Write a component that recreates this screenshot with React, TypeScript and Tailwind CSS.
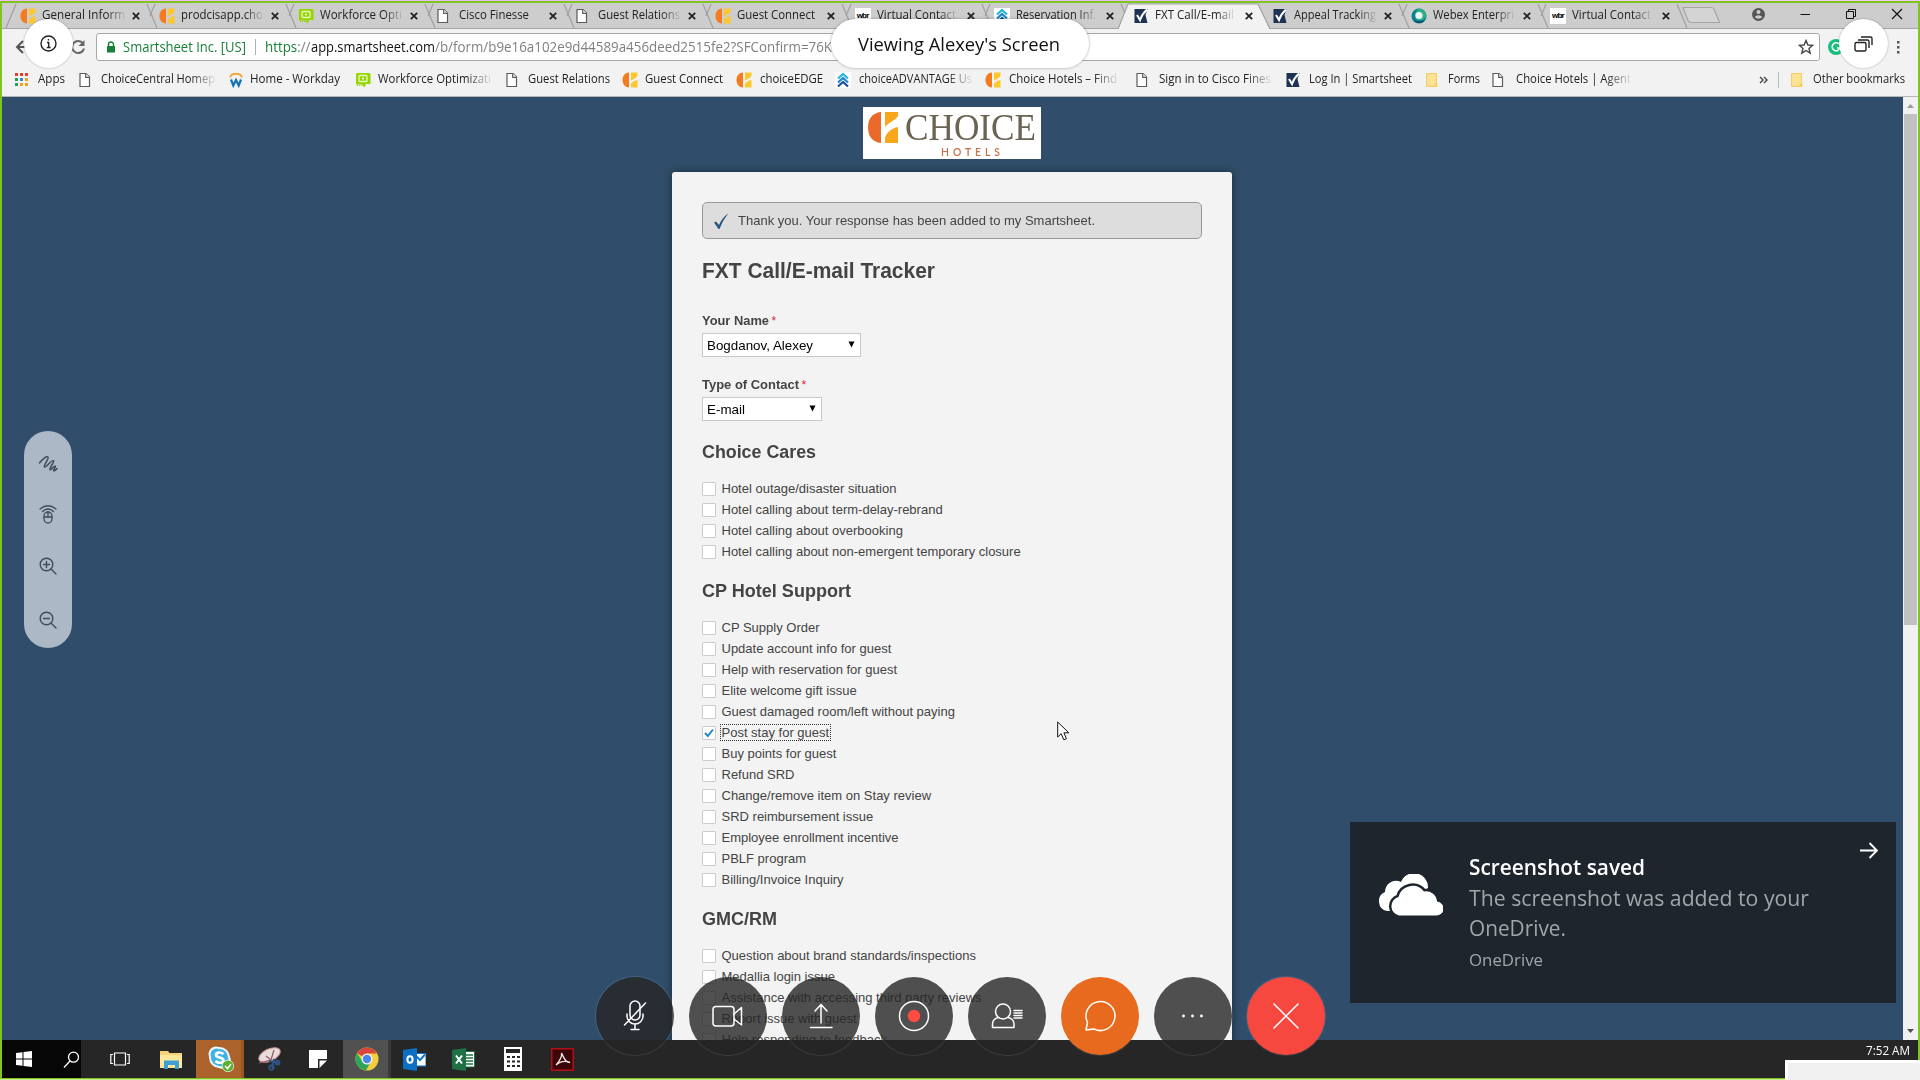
import { useLayoutEffect, useRef, useState, type ReactNode } from 'react';

/* Text stretched or condensed horizontally to an exact width. */
function Fit({ w, className = '', children }: { w: number; className?: string; children: ReactNode }) {
  const ref = useRef<HTMLSpanElement>(null);
  const [k, setK] = useState(1);
  useLayoutEffect(() => {
    const el = ref.current;
    if (el) {
      const prev = el.style.transform;
      el.style.transform = 'none';
      const n = el.getBoundingClientRect().width;
      el.style.transform = prev;
      if (n > 0) setK(w / n);
    }
  }, [w]);
  return (
    <span className={`block shrink-0 whitespace-nowrap ${className}`} style={{ width: w }}>
      <span ref={ref} className="inline-block origin-left whitespace-pre" style={{ transform: `scaleX(${k})` }}>
        {children}
      </span>
    </span>
  );
}

const FADE = '[mask-image:linear-gradient(to_right,black_78%,transparent_102%)]';

type IconName = 'choice' | 'chat' | 'page' | 'wbr' | 'adv' | 'check' | 'webex' | 'apps' | 'workday' | 'folder';

function SiteIcon({ name }: { name: IconName }) {
  const c = 'block h-4 w-4 shrink-0';
  switch (name) {
    case 'choice':
      return (
        <svg className={c} viewBox="0 0 16 16">
          <path d="M7 0.5V15.5C2.5 15 0.5 12 0.5 8S2.5 1 7 .5Z" fill="#f47b20" />
          <path d="M9 .5H15.5V4L13 6.500 9 8.500Z" fill="#fdc82f" />
          <path d="M15.500 8V15.500H9V11.500L12 9Z" fill="#fdc82f" />
        </svg>
      );
    case 'chat':
      return (
        <svg className={c} viewBox="0 0 16 16">
          <path d="M2 1H14A1.500 1.500 0 0 1 15.500 2.500V12H11L9.500 15.500 7 12.500H1V2Z" fill="#95d600" />
          <rect x="4" y="3.500" width="8" height="6" rx="1" fill="none" stroke="#e6f7c8" strokeWidth="1.300" />
          <circle cx="8" cy="6.500" r="1" fill="#fff" />
          <path d="M2 13.500H7" stroke="#95d600" strokeDasharray="1 1" />
        </svg>
      );
    case 'page':
      return (
        <svg className={c} viewBox="2.500 0 16 16" fill="#fff" stroke="#5a5a5a" strokeWidth="1.200">
          <path d="M3.500 1.500H9.500L13 5V14.500H3.500Z" />
          <path d="M9.200 1.500V5.300H13" />
        </svg>
      );
    case 'wbr':
      return (
        <span className="flex h-4 w-4 shrink-0 items-center justify-center bg-white font-['Liberation_Sans'] text-[8px] font-bold tracking-[-0.800px] text-black">
          wbr
        </span>
      );
    case 'adv':
      return (
        <svg className={c} viewBox="0 0 16 16">
          <rect width="16" height="16" fill="#fff" />
          <g fill="none" strokeWidth="2.200">
            <path d="M3 6.500 8 2 13 6.500" stroke="#27b5d8" />
            <path d="M3 10.500 8 6 13 10.500" stroke="#1c86c8" />
            <path d="M3 14.500 8 10 13 14.500" stroke="#1a4f9c" />
          </g>
        </svg>
      );
    case 'check':
      return (
        <svg className={c} viewBox="0 0 16 16">
          <path d="M1.500 1H14.500L12.500 7 14.500 15H1.500Z" fill="#1e3353" />
          <path d="M4 7 7 12Q9 6 14 1.500" fill="none" stroke="#fff" strokeWidth="2" />
        </svg>
      );
    case 'webex':
      return (
        <svg className={c} viewBox="0 0 16 16">
          <circle cx="8" cy="8" r="7.500" fill="#0a7f8f" />
          <path d="M8 .5A7.500 7.500 0 0 1 15.500 8C14 12 9 14 5 11 3 8 4 3 8 .5Z" fill="#2fae8a" />
          <circle cx="8" cy="7.500" r="3.600" fill="#eaf6f4" />
          <path d="M2 12A7.500 7.500 0 0 0 14 12C10 14 5 14 2 12Z" fill="#10406a" />
        </svg>
      );
    case 'apps':
      return (
        <span className="grid shrink-0 grid-cols-3 gap-[2px]">
          {['bg-[#e8402a]', 'bg-[#e8402a]', 'bg-[#e8402a]', 'bg-[#1aa260]', 'bg-[#4285c8]', 'bg-[#f0a020]', 'bg-[#1aa260]', 'bg-[#f0a020]', 'bg-[#f0a020]'].map((b, i) => (
            <span key={i} className={`h-[3px] w-[3px] ${b}`} />
          ))}
        </span>
      );
    case 'workday':
      return (
        <svg className={c} viewBox="0 0 16 16" fill="none">
          <path d="M2 5.500A6.200 5 0 0 1 14 5.500" stroke="#efa741" strokeWidth="1.800" />
          <path d="M3 7.500 5.300 13.500 8 8 10.700 13.500 13 7.500" stroke="#1572b6" strokeWidth="2.200" />
        </svg>
      );
    case 'folder':
      return (
        <svg className={c} viewBox="0 0 16 16">
          <path d="M2.500 1.500H12.500V14.500H2.500Z" fill="#fde293" stroke="#f0cd62" />
          <path d="M10.500 11.500H13.500V14.500H10.500Z" fill="#f3cf62" />
        </svg>
      );
  }
}

const TABS: { icon: IconName; text: string; w: number; fade?: boolean; active?: boolean }[] = [
  { icon: 'choice', text: 'General Inform', w: 83, fade: true },
  { icon: 'choice', text: 'prodcisapp.cho', w: 82, fade: true },
  { icon: 'chat', text: 'Workforce Opti', w: 82, fade: true },
  { icon: 'page', text: 'Cisco Finesse', w: 70 },
  { icon: 'page', text: 'Guest Relations', w: 82, fade: true },
  { icon: 'choice', text: 'Guest Connect', w: 78 },
  { icon: 'wbr', text: 'Virtual Contact', w: 79, fade: true },
  { icon: 'adv', text: 'Reservation Inf.', w: 80, fade: true },
  { icon: 'check', text: 'FXT Call/E-mail', w: 79, fade: true, active: true },
  { icon: 'check', text: 'Appeal Tracking', w: 82, fade: true },
  { icon: 'webex', text: 'Webex Enterpri', w: 81, fade: true },
  { icon: 'wbr', text: 'Virtual Contact', w: 79, fade: true },
];

function Tab({ tab, first, afterActive }: { tab: (typeof TABS)[number]; first: boolean; afterActive: boolean }) {
  return (
    <div className="relative flex h-[26px] w-[139.100px] shrink-0 items-center pb-px pl-[7px]">
      <svg className="absolute top-0 -left-2 h-[26px] w-[156px]" viewBox="0 0 156 26" fill="none" stroke="#a0a0a0" strokeWidth="1.200">
        {tab.active && <path d="M0 26 10 1H140L152 26" fill="#f2f2f2" />}
        {!tab.active && (first ? <path d="M1 25 11 1" /> : !afterActive && <path d="M6 13 11 1" />)}
        {!tab.active && <path d="M142 1 152 25" />}
      </svg>
      <div className="relative flex items-center">
        <SiteIcon name={tab.icon} />
        <Fit w={tab.w} className={`ml-[6px] text-[12.500px] text-[#222] ${tab.fade ? FADE : ''}`}>
          {tab.text}
        </Fit>
      </div>
      <svg className="absolute top-[9px] left-[119px] h-2 w-2" viewBox="0 0 8 8" stroke="#222" strokeWidth="1.800">
        <path d="M.8.8 7.200 7.200M7.200.8.8 7.200" />
      </svg>
    </div>
  );
}

const MARKS: { icon: IconName; text: string; w: number; cell: string; gap: string; fade?: boolean }[] = [
  { icon: 'apps', text: 'Apps', w: 27, cell: 'w-[64px]', gap: 'gap-[10px]' },
  { icon: 'page', text: 'ChoiceCentral Homep', w: 114, cell: 'w-[149px]', gap: 'gap-[6px]', fade: true },
  { icon: 'workday', text: 'Home - Workday', w: 90, cell: 'w-[127px]', gap: 'gap-[6px]' },
  { icon: 'chat', text: 'Workforce Optimizati', w: 113, cell: 'w-[151px]', gap: 'gap-[7px]', fade: true },
  { icon: 'page', text: 'Guest Relations', w: 82, cell: 'w-[116px]', gap: 'gap-[6px]' },
  { icon: 'choice', text: 'Guest Connect', w: 78, cell: 'w-[114px]', gap: 'gap-[7px]' },
  { icon: 'choice', text: 'choiceEDGE', w: 63, cell: 'w-[99px]', gap: 'gap-[8px]' },
  { icon: 'adv', text: 'choiceADVANTAGE Us', w: 113, cell: 'w-[150px]', gap: 'gap-[8px]', fade: true },
  { icon: 'choice', text: 'Choice Hotels – Find', w: 108, cell: 'w-[151px]', gap: 'gap-[8px]', fade: true },
  { icon: 'page', text: 'Sign in to Cisco Fines', w: 112, cell: 'w-[149px]', gap: 'gap-[7px]', fade: true },
  { icon: 'check', text: 'Log In | Smartsheet', w: 103, cell: 'w-[139px]', gap: 'gap-[8px]' },
  { icon: 'folder', text: 'Forms', w: 32, cell: 'w-[68px]', gap: 'gap-[8px]' },
  { icon: 'page', text: 'Choice Hotels | Agent', w: 115, cell: 'w-[150px]', gap: 'gap-[8px]', fade: true },
];

function Browser() {
  return (
    <header className="flex h-[94px] flex-col border-b border-[#b6b6b6] bg-[#f2f2f2] font-['Open_Sans','Noto_Sans',sans-serif]">
      <div className="flex h-[26px] shrink-0 border-b border-[#a5a5a5] bg-[#cdcdcd] pl-[11px]">
        {TABS.map((t, i) => (
          <Tab key={i} tab={t} first={i === 0} afterActive={i > 0 && !!TABS[i - 1].active} />
        ))}
        <svg className="mt-[3px] ml-[-1px] h-[18px] w-[40px]" viewBox="0 0 40 18" fill="#d4d4d4" stroke="#a5a5a5" strokeWidth="1.200">
          <path d="M2 1.500H30Q32 1.500 33 3L38.500 16.500H10Q8 16.500 7 14.500Z" />
        </svg>
        <div className="ml-[30px] flex items-center pb-[3px]">
          <svg className="h-[15px] w-[15px]" viewBox="0 0 15 15">
            <circle cx="7.500" cy="7.500" r="6.500" fill="#555" />
            <circle cx="7.500" cy="5" r="2" fill="#cdcdcd" />
            <path d="M3.500 10Q7.500 6.500 11.500 10Q7.500 13.500 3.500 10Z" fill="#cdcdcd" />
          </svg>
          <svg className="ml-[33px] h-3 w-3" viewBox="0 0 12 12" stroke="#111">
            <path d="M1.500 6.500H11" />
          </svg>
          <svg className="ml-[34px] h-3 w-3" viewBox="0 0 12 12" fill="none" stroke="#111">
            <path d="M1.500 3.500H8.500V10.500H1.500ZM3.500 3.500V1.500H10.500V8.500H8.500" />
          </svg>
          <svg className="ml-[34px] h-3 w-3" viewBox="0 0 12 12" stroke="#111" strokeWidth="1.200">
            <path d="M1 1 11 11M11 1 1 11" />
          </svg>
        </div>
      </div>
      <div className="flex h-[36px] shrink-0 items-center pl-[12px]">
        <svg className="h-4 w-4" viewBox="0 0 16 16" fill="none" stroke="#555" strokeWidth="2">
          <path d="M15 8H3M9 2 3 8 9 14" />
        </svg>
        <svg className="ml-[40px] h-4 w-4" viewBox="0 0 16 16" fill="none" stroke="#666" strokeWidth="2">
          <path d="M13 4.500A6 6 0 1 0 14 9.500" />
          <path d="M14.500 1V7H8.500Z" fill="#666" stroke="none" />
        </svg>
        <div className="ml-[10px] flex h-[28px] w-[1724px] items-center rounded-[3px] border border-[#a9a9a9] bg-white pb-px pl-[10px] text-[14px]">
          <svg className="h-3 w-[8px]" viewBox="0 0 8 12">
            <path d="M1.500 6V3.500A2.500 2.500 0 0 1 6.500 3.500V6" fill="none" stroke="#188038" strokeWidth="1.400" />
            <rect y="5" width="8" height="6.500" fill="#188038" />
          </svg>
          <Fit w={123} className="ml-[8px] text-[#188038]">Smartsheet Inc. [US]</Fit>
          <span className="ml-[9px] h-4 w-px bg-[#b0b0b0]" />
          <Fit w={45.500} className="ml-[9px] text-[#188038]">
            https<span className="text-[#808080]">://</span>
          </Fit>
          <Fit w={124} className="text-[#111]">app.smartsheet.com</Fit>
          <Fit w={397} className="text-[#808080]">/b/form/b9e16a102e9d44589a456deed2515fe2?SFConfirm=76K</Fit>
          <svg className="ml-auto mr-[5px] h-4 w-4" viewBox="0 0 16 16" fill="none" stroke="#444" strokeWidth="1.400">
            <path d="M8 1.500 9.900 6 14.700 6.300 11 9.400 12.200 14.200 8 11.500 3.800 14.200 5 9.400 1.300 6.300 6.100 6Z" />
          </svg>
        </div>
        <svg className="ml-[8px] h-4 w-4" viewBox="0 0 16 16">
          <circle cx="8" cy="8" r="8" fill="#15c07a" />
          <path d="M11 5A4 4 0 1 0 12 9H9" fill="none" stroke="#fff" strokeWidth="1.500" />
        </svg>
        <svg className="ml-[46px] h-4 w-4" viewBox="0 0 16 16" fill="#555">
          <rect x="7" y="2" width="2.500" height="2.500" />
          <rect x="7" y="7" width="2.500" height="2.500" />
          <rect x="7" y="12" width="2.500" height="2.500" />
        </svg>
      </div>
      <div className="flex h-[29px] shrink-0 items-center pl-[13px] text-[12.500px] text-[#222]">
        {MARKS.map((m, i) => (
          <div key={i} className={`flex shrink-0 items-center ${m.cell} ${m.gap}`}>
            <SiteIcon name={m.icon} />
            <Fit w={m.w} className={m.fade ? FADE : ''}>{m.text}</Fit>
          </div>
        ))}
        <svg className="ml-[117px] h-[8px] w-[9px]" viewBox="0 0 9 8" fill="none" stroke="#444" strokeWidth="1.400">
          <path d="M1 1 4 4 1 7M5 1 8 4 5 7" />
        </svg>
        <span className="ml-[10px] h-4 w-px bg-[#bbb]" />
        <div className="ml-[10px] flex items-center gap-[8px]">
          <SiteIcon name="folder" />
          <Fit w={92}>Other bookmarks</Fit>
        </div>
      </div>
    </header>
  );
}

const GROUPS = [
  {
    title: 'Choice Cares',
    w: 114,
    items: [
      'Hotel outage/disaster situation',
      'Hotel calling about term-delay-rebrand',
      'Hotel calling about overbooking',
      'Hotel calling about non-emergent temporary closure',
    ],
  },
  {
    title: 'CP Hotel Support',
    w: 149,
    items: [
      'CP Supply Order',
      'Update account info for guest',
      'Help with reservation for guest',
      'Elite welcome gift issue',
      'Guest damaged room/left without paying',
      'Post stay for guest',
      'Buy points for guest',
      'Refund SRD',
      'Change/remove item on Stay review',
      'SRD reimbursement issue',
      'Employee enrollment incentive',
      'PBLF program',
      'Billing/Invoice Inquiry',
    ],
  },
  {
    title: 'GMC/RM',
    w: 75,
    items: [
      'Question about brand standards/inspections',
      'Medallia login issue',
      'Assistance with accessing third party reviews',
      'Report issue with guest',
      'Help responding to feedback',
    ],
  },
];

function Item({ text }: { text: string }) {
  const checked = text === 'Post stay for guest';
  return (
    <li className="flex h-[21px] items-center">
      <span className="flex h-[14px] w-[14px] items-center justify-center rounded-[1px] border border-[#ccc] bg-white">
        {checked && (
          <svg className="h-[10px] w-[10px]" viewBox="0 0 10 10" fill="none" stroke="#2a86c0" strokeWidth="2">
            <path d="M1 5 3.800 8 9 1.500" />
          </svg>
        )}
      </span>
      <span className={`ml-[5px] px-px leading-[15px] text-[#444] ${checked ? 'outline-1 outline-dotted outline-[#333]' : ''}`}>{text}</span>
    </li>
  );
}

function Select({ value, w, className }: { value: string; w: number; className: string }) {
  return (
    <div className={`flex h-[24px] items-center justify-between border border-[#c8c8c8] bg-white pt-px pr-[5px] pl-[4px] text-[13.300px] text-black ${className}`}>
      <Fit w={w}>{value}</Fit>
      <svg className="mb-[2px] h-[7px] w-[7px]" viewBox="0 0 7 7">
        <path d="M.5.5H6.500L3.500 6.500Z" fill="#000" />
      </svg>
    </div>
  );
}

function Form() {
  return (
    <main className="flex min-h-0 flex-1 flex-col items-center overflow-hidden bg-[#304e6b] pr-[2px] font-['Liberation_Sans',Arial,sans-serif] text-[13px]">
      <div className="mt-[10px] flex h-[52px] w-[178px] shrink-0 bg-white pt-[5px] pl-[5px]">
        <svg className="h-[31px] w-[30px]" viewBox="0 0 30 31">
          <path d="M13 0V31C4 30 0 24 0 15.500S4 1 13 0Z" fill="#ea6a2b" />
          <path d="M17 0H30V4C27 9 22 9 17 15Z" fill="#f9a61a" />
          <path d="M30 15V31H17V26C18 21 24 16 30 15Z" fill="#f9a61a" />
        </svg>
        <div className="ml-[7px] flex flex-col font-['Liberation_Serif',serif] text-[#6b6452]">
          <Fit w={131} className="h-[35px] text-[37px] leading-[31px]">CHOICE</Fit>
          <Fit w={63} className="ml-[36px] h-[10px] font-['Lato',sans-serif] text-[10.500px] leading-[10px] font-semibold tracking-[4px] text-[#c8704a]">
            HOTELS
          </Fit>
        </div>
      </div>
      <div className="mt-[13px] h-[1000px] w-[560px] shrink-0 rounded-t-[3px] bg-[#f3f3f3] px-[30px] pt-[30px] text-[#444] shadow-[0_0_10px_rgba(0,0,0,0.450)]">
        <div className="flex h-[37px] w-[500px] items-center rounded-[5px] border border-[#999] bg-[#ddd] pl-[11px]">
          <svg className="h-[16px] w-[15px]" viewBox="0 0 15 16">
            <path d="M0 9.500 2 8.500 5 12Q8 5 14.500 0Q8.500 7.500 5.500 16H4.500Z" fill="#2c5480" />
          </svg>
          <Fit w={357} className="ml-[9px]">Thank you. Your response has been added to my Smartsheet.</Fit>
        </div>
        <h1 className="mt-[17px] flex h-[30px] items-center text-[21.500px] font-bold">
          <Fit w={233}>FXT Call/E-mail Tracker</Fit>
        </h1>
        <div className="mt-[27px] flex h-[16px] gap-[3px] font-bold">
          <Fit w={67} className="leading-[16px]">Your Name</Fit>
          <span className="text-[12px] leading-[17px] font-normal text-[#e02040]">*</span>
        </div>
        <Select value="Bogdanov, Alexey" w={106} className="mt-[4px] w-[159px]" />
        <div className="mt-[20px] flex h-[16px] gap-[3px] font-bold">
          <Fit w={97} className="leading-[16px]">Type of Contact</Fit>
          <span className="text-[12px] leading-[17px] font-normal text-[#e02040]">*</span>
        </div>
        <Select value="E-mail" w={38} className="mt-[4px] w-[120px]" />
        {GROUPS.map((g) => (
          <section key={g.title} className="mb-[19px] last:mb-0 [&:first-of-type]:mt-[21px]">
            <h2 className="flex h-[20px] items-center text-[17.500px] font-bold">
              <Fit w={g.w}>{g.title}</Fit>
            </h2>
            <ul className="mt-[16px]">
              {g.items.map((t) => (
                <Item key={t} text={t} />
              ))}
            </ul>
          </section>
        ))}
      </div>
    </main>
  );
}

function Scrollbar() {
  return (
    <div className="flex w-[15px] flex-col items-center bg-[#f1f1f1]">
      <svg className="mt-[7px] h-[4px] w-[7px]" viewBox="0 0 7 4">
        <path d="M0 4 3.500 0 7 4Z" fill="#9a9a9a" />
      </svg>
      <div className="mt-[6px] h-[511px] w-[13px] bg-[#c1c1c1]" />
      <svg className="mt-auto mb-[7px] h-[4px] w-[7px]" viewBox="0 0 7 4">
        <path d="M0 0H7L3.500 4Z" fill="#505050" />
      </svg>
    </div>
  );
}

function Taskbar() {
  return (
    <footer className="flex h-[38px] shrink-0 bg-[#262626]">
      <div className="flex w-[79px] items-center bg-[#060606] pl-[14px]">
        <svg className="h-4 w-4" viewBox="0 0 16 16" fill="#fff">
          <path d="M0 2 6.500 1.200V7.500H0ZM7.500 1 16 0V7.500H7.500ZM0 8.500H6.500V14.800L0 14ZM7.500 8.500H16V16L7.500 15Z" />
        </svg>
        <svg className="ml-[31px] h-[17px] w-[17px]" viewBox="0 0 17 17" fill="none" stroke="#fff" strokeWidth="1.300">
          <circle cx="10.500" cy="6.200" r="5" />
          <path d="M7 10 1 16.500" />
        </svg>
      </div>
      <div className="flex w-[115px] items-center pl-[29px]">
        <svg className="h-[14px] w-[20px]" viewBox="0 0 20 14" fill="none" stroke="#fff" strokeWidth="1.200">
          <path d="M4.500 1H15.500V13H4.500ZM3 2.500H.8V11.500H3M17 2.500H19.200V11.500H17" />
        </svg>
        <svg className="ml-[30px] h-[19px] w-[22px]" viewBox="0 0 22 19">
          <path d="M0 1H8L9.500 3H22V18H0Z" fill="#f5d376" />
          <path d="M0 5H22V18H0Z" fill="#fde79b" />
          <path d="M4 10.500H19V19H15V15H8V19H4Z" fill="#3f9fd0" />
        </svg>
      </div>
      <div className="flex w-[48px] items-center border-r-[3px] border-[#9a5522] bg-[#ab622b] pl-[12px]">
        <svg className="h-[26px] w-[26px] shrink-0" viewBox="0 0 26 26">
          <circle cx="8" cy="8" r="7.500" fill="#eaf7fc" />
          <circle cx="15" cy="15" r="8" fill="#eaf7fc" />
          <circle cx="11.500" cy="11.500" r="10.500" fill="#eaf7fc" />
          <circle cx="8.500" cy="8.500" r="6" fill="#3fb4e4" />
          <circle cx="14" cy="14" r="6.500" fill="#3fb4e4" />
          <circle cx="11.500" cy="11.500" r="8.500" fill="#3fb4e4" />
          <path d="M15.500 8C12 5.500 8 6.500 8 9 8 12 15.500 11 15.500 14.500 15 17.500 10 17.500 7.500 15" fill="none" stroke="#fff" strokeWidth="2.600" />
          <circle cx="20" cy="20" r="5.800" fill="#5db030" stroke="#e8f5df" strokeWidth=".8" />
          <path d="M17 20 19.500 22.500 23 18" fill="none" stroke="#fff" strokeWidth="1.500" />
        </svg>
      </div>
      <div className="flex w-[99px] items-center pl-[13px]">
        <svg className="h-[24px] w-[24px]" viewBox="0 0 24 24">
          <ellipse cx="12.500" cy="8" rx="11.500" ry="6" transform="rotate(-25 12.500 8)" fill="#e8dcdc" stroke="#c99090" />
          <path d="M2 16 14 13 17 3M9 9 14 13" fill="none" stroke="#94595c" strokeWidth="1.200" />
          <path d="M12 14 23 16M17 12 15 21" stroke="#2f5488" strokeWidth="2" />
          <circle cx="14.500" cy="20.500" r="2.300" fill="none" stroke="#2f5488" strokeWidth="1.700" />
          <circle cx="20.500" cy="15.500" r="2" fill="none" stroke="#2f5488" strokeWidth="1.700" />
        </svg>
        <svg className="ml-[28px] h-[18px] w-[18px]" viewBox="0 0 18 18">
          <path d="M0 0H18V9H9V18H0Z" fill="#fff" />
          <path d="M10.500 10.500H18L10.500 18Z" fill="#fff" />
        </svg>
      </div>
      <div className="flex w-[48px] items-center border-r-[3px] border-[#3a3a3a] bg-[#515151] pl-[12px]">
        <svg className="h-[24px] w-[24px] shrink-0" viewBox="0 0 24 24">
          <circle cx="12" cy="12" r="11.500" fill="#f5cf3b" />
          <path d="M12 12 2 6.200A11.500 11.500 0 0 1 22 6.500H12Z" fill="#d8473c" />
          <path d="M2 6.200A11.500 11.500 0 0 0 11 23.500L15.500 15 8 15Z" fill="#2fa55a" />
          <circle cx="12" cy="12" r="5.500" fill="#f4f4f4" />
          <circle cx="12" cy="12" r="4.200" fill="#4a85e8" />
        </svg>
      </div>
      <div className="flex items-center pl-[12px]">
        <svg className="h-[23px] w-[23px]" viewBox="0 0 23 23">
          <path d="M10 5.500H23V18H10Z" fill="#fff" stroke="#1473c5" />
          <path d="M13 8 17 12 22 6.500" fill="none" stroke="#1473c5" strokeWidth="2" />
          <path d="M0 2 14 0V23L0 21Z" fill="#0d6fc4" />
          <ellipse cx="7" cy="11.500" rx="2.600" ry="3.200" fill="none" stroke="#fff" strokeWidth="2" />
        </svg>
        <svg className="ml-[26px] h-[23px] w-[23px]" viewBox="0 0 23 23">
          <path d="M12 3.500H22.500V19H12Z" fill="#fff" stroke="#1f7145" />
          <path d="M14 7H21M14 10H21M14 13H21M14 16H21" stroke="#1f7145" strokeWidth="1.400" />
          <path d="M0 2 14 0V23L0 21Z" fill="#1f7145" />
          <path d="M4 7.500 10 15.500M10 7.500 4 15.500" stroke="#fff" strokeWidth="2" />
        </svg>
        <svg className="ml-[29px] h-[24px] w-[18px]" viewBox="0 0 18 24">
          <rect width="18" height="24" fill="#fff" />
          <rect x="2" y="2" width="14" height="4" fill="#262626" />
          <path d="M3 10H16M3 14.500H16M3 19H16" stroke="#262626" strokeWidth="2" strokeDasharray="3 2" />
        </svg>
        <svg className="ml-[29px] h-[23px] w-[23px]" viewBox="0 0 23 23">
          <rect x=".75" y=".75" width="21.500" height="21.500" fill="#3c0507" stroke="#b01016" strokeWidth="1.500" />
          <path d="M5 17C8 14 11.500 8 10.500 5 14 13 16 14.500 19 14.500 14 12 8 14 5 17Z" fill="none" stroke="#f2e6e6" strokeWidth="1.400" />
        </svg>
      </div>
      <Fit w={44} className="ml-auto mr-[8px] pt-[2px] font-['Open_Sans','Noto_Sans',sans-serif] text-[12px] text-white">7:52 AM</Fit>
    </footer>
  );
}

const CALL: { bg: string; icon: ReactNode }[] = [
  {
    bg: 'bg-[#262626]/80',
    icon: (
      <>
        <rect x="12" y="2" width="10" height="19" rx="5" />
        <path d="M9 15V17A8 8 0 0 0 25 17V15M17 25V30M13 30.500H21M6.500 26 27.500 4" />
      </>
    ),
  },
  {
    bg: 'bg-[#262626]/80',
    icon: (
      <>
        <rect x="2" y="7.500" width="21" height="19.500" rx="3" />
        <path d="M23 15 30.500 8.500V26L23 20" />
      </>
    ),
  },
  { bg: 'bg-[#262626]/80', icon: <path d="M17 24V6M11 12 17 5.500 23 12M6.500 28.500H28" /> },
  {
    bg: 'bg-[#262626]/80',
    icon: (
      <>
        <circle cx="17" cy="17" r="14.500" />
        <circle cx="17" cy="17" r="6.200" fill="#ff4b42" stroke="none" />
      </>
    ),
  },
  {
    bg: 'bg-[#262626]/80',
    icon: (
      <>
        <circle cx="13" cy="12.500" r="7.500" />
        <path d="M8.500 18.500Q2.500 20 2.500 25V28.500H24V25Q24 20 18 18.500M24 11.500H32M24 14H32M24 16.500H32M24 19H32" />
      </>
    ),
  },
  { bg: 'bg-[#e86a1f]', icon: <path d="M3 31 4.500 23.500A14.500 14.500 0 1 1 11 30Z" /> },
  {
    bg: 'bg-[#262626]/80',
    icon: (
      <g fill="#fff" stroke="none">
        <circle cx="7.500" cy="17" r="1.400" />
        <circle cx="16.500" cy="17" r="1.400" />
        <circle cx="25.500" cy="17" r="1.400" />
      </g>
    ),
  },
  { bg: 'bg-[#f6483f]', icon: <path d="M5 5 29 29M29 5 5 29" /> },
];

function CallControls() {
  return (
    <div className="absolute top-[976.500px] left-[595.500px] flex gap-[15.050px]">
      {CALL.map((c, i) => (
        <button key={i} className={`flex h-[78px] w-[78px] items-center justify-center rounded-full ring-1 ring-white/10 ${c.bg}`}>
          <svg className="h-[34px] w-[34px]" viewBox="0 0 34 34" fill="none" stroke="#fff" strokeWidth="1.500" strokeLinecap="round" strokeLinejoin="round">
            {c.icon}
          </svg>
        </button>
      ))}
    </div>
  );
}

function SideTools() {
  return (
    <div className="absolute top-[431px] left-[23.500px] flex h-[217px] w-[48px] flex-col items-center rounded-full bg-[#acb8c5] pt-[24px]">
      <svg className="h-[18px] w-[20px]" viewBox="0 0 20 18" fill="none" stroke="#3f4c5a" strokeWidth="1.500" strokeLinecap="round" strokeLinejoin="round">
        <path d="M1.500 8C4.500 4 8.500 1 10 2C11.500 3.200 5 10.500 6.500 12C8 13.200 13.500 4.500 15.500 5.700C17 7 10.500 13.500 12 14.700C13 15.500 16 10.300 17.300 11.200C18 12 14.800 15.200 15.700 15.700C16.500 16 18 14.800 19 13.500" />
      </svg>
      <svg className="mt-[31px] h-[20px] w-[20px]" viewBox="0 0 20 20" fill="none" stroke="#3f4c5a" strokeWidth="1.300" strokeLinecap="round">
        <path d="M2 5Q10-1.500 18 5M4.500 7.500Q10 2.500 15.500 7.500" />
        <rect x="6" y="8" width="8" height="11" rx="4" />
        <path d="M6 13H14M10 8V13" />
      </svg>
      <svg className="mt-[33px] h-[18px] w-[18px]" viewBox="0 0 18 18" fill="none" stroke="#3f4c5a" strokeWidth="1.400" strokeLinecap="round">
        <circle cx="7.500" cy="7.500" r="6.300" />
        <path d="M12 12 17 17M4.500 7.500H10.500M7.500 4.500V10.500" />
      </svg>
      <svg className="mt-[36px] h-[18px] w-[18px]" viewBox="0 0 18 18" fill="none" stroke="#3f4c5a" strokeWidth="1.400" strokeLinecap="round">
        <circle cx="7.500" cy="7.500" r="6.300" />
        <path d="M12 12 17 17M4.500 7.500H10.500" />
      </svg>
    </div>
  );
}

function Toast() {
  return (
    <div className="absolute top-[822px] left-[1350px] flex h-[181px] w-[546px] bg-[#1e252d] font-['Open_Sans','Noto_Sans',sans-serif]">
      <svg className="mt-[52px] ml-[27px] h-[42px] w-[66px]" viewBox="0 0 66 42">
        <path d="M13 37H10A10 10 0 0 1 8 18 11 11 0 0 1 24 8 14 14 0 0 1 51 14" fill="#fff" />
        <path d="M22 41.500A9.500 9.500 0 0 1 21.500 23 14.500 14.500 0 0 1 47 17.500 11 11 0 0 1 60 27.500 7 7 0 0 1 59 41.500Z" fill="#fff" stroke="#1e252d" strokeWidth="5" paintOrder="stroke" />
      </svg>
      <div className="mt-[29px] ml-[26px]">
        <Fit w={176} className="text-[22px] leading-[31px] font-semibold text-white">Screenshot saved</Fit>
        <Fit w={340} className="text-[22px] leading-[30px] text-[#a3a6a9]">The screenshot was added to your</Fit>
        <Fit w={97} className="text-[22px] leading-[30px] text-[#a3a6a9]">OneDrive.</Fit>
        <Fit w={74} className="mt-[5px] text-[17px] leading-[25px] text-[#a3a6a9]">OneDrive</Fit>
      </div>
      <svg className="absolute top-[20px] right-[18px] h-[17px] w-[18px]" viewBox="0 0 18 17" fill="none" stroke="#fff" strokeWidth="1.900">
        <path d="M0 8.500H17M9.500 1 17 8.500 9.500 16" />
      </svg>
    </div>
  );
}

export default function App() {
  return (
    <div className="relative flex h-[1080px] w-[1920px] flex-col overflow-hidden bg-white">
      <div className="flex h-px shrink-0">
        <span className="w-[190px] bg-[#f5b8f5]" />
        <span className="flex-1 bg-[#e9bdf2]" />
        <span className="w-[500px] bg-[#f7c8f7]" />
      </div>
      <div className="flex h-[1078px] shrink-0 flex-col border-x-2 border-t-2 border-b border-[#7cc61f]">
        <Browser />
        <div className="flex min-h-0 flex-1">
          <Form />
          <Scrollbar />
        </div>
        <Taskbar />
      </div>
      <div className="h-px bg-[#c9ee8f]" />

      <SideTools />
      <Toast />
      <CallControls />

      <div className="absolute top-[19px] left-[23.500px] flex h-[49px] w-[49px] items-center justify-center rounded-full bg-white shadow-[0_0_2px_rgba(0,0,0,0.350)]">
        <svg className="h-[17px] w-[17px]" viewBox="0 0 17 17" fill="none" stroke="#222" strokeWidth="1.400">
          <circle cx="8.500" cy="8.500" r="7.500" />
          <path d="M7 7.500H8.700V12.500M6.800 12.500H10.600M8.500 4V5.500" />
        </svg>
      </div>
      <div className="absolute top-[19px] left-[831px] flex h-[49px] w-[258px] items-center rounded-full bg-white pl-[27px] font-['Open_Sans','Noto_Sans',sans-serif] text-[18.500px] text-[#111] shadow-[0_0_3px_rgba(0,0,0,0.350)]">
        <Fit w={202}>Viewing Alexey's Screen</Fit>
      </div>
      <div className="absolute top-[19px] left-[1839px] flex h-[49px] w-[49px] items-center justify-center rounded-full bg-white shadow-[0_0_2px_rgba(0,0,0,0.350)]">
        <svg className="h-[16px] w-[19px]" viewBox="0 0 19 16" fill="none" stroke="#222" strokeWidth="1.400">
          <rect x="1" y="6.500" width="11" height="8.500" rx="1.500" />
          <path d="M4 4H13.500Q15 4 15 5.500V12M7 1H16.500Q18 1 18 2.500V9" />
        </svg>
      </div>
      <div className="absolute right-0 bottom-0 h-[20px] w-[135px] border-t-[3px] border-l-[3px] border-white bg-[#f0f0f0]" />

      <svg className="absolute top-[721px] left-[1057px] h-[20px] w-[13px]" viewBox="0 0 13 20">
        <path d="M.7 1V16L4.200 12.700 6.800 18.800 9.400 17.700 6.900 11.800H11.800Z" fill="#fff" stroke="#111" />
      </svg>
    </div>
  );
}
